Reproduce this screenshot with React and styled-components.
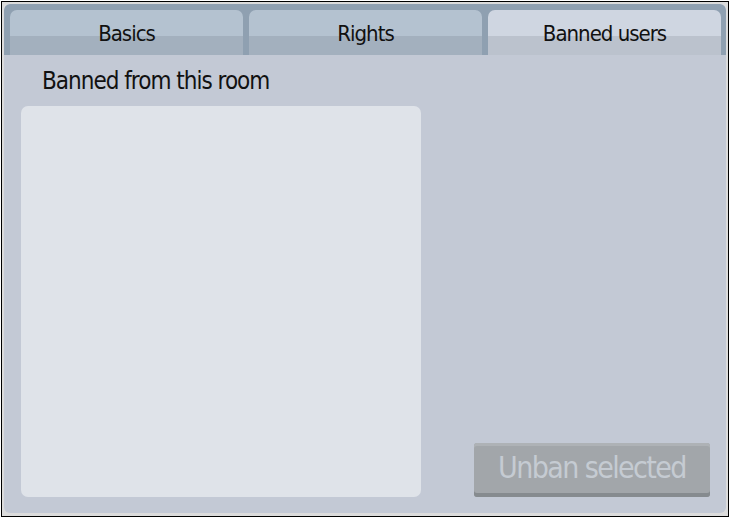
import React from "react";
import styled, { createGlobalStyle } from "styled-components";

const GlobalStyle = createGlobalStyle`
    html, body {
        margin: 0;
        padding: 0;
        background: #ffffff;
    }
    body {
        font-family: "DejaVu Sans Condensed", "DejaVu Sans", sans-serif;
    }
`;

const Frame = styled.div`
    box-sizing: border-box;
    width: 728px;
    height: 516px;
    margin: 1px 0 0 1px;
    border: 1px solid #000000;
    background: #dcdcdc;
    padding: 2px 2px 3px 2px;
`;

const Panel = styled.div`
    box-sizing: border-box;
    height: 100%;
    background: #c3c9d5;
    border-radius: 6px;
    display: flex;
    flex-direction: column;
    overflow: hidden;
`;

const TabBar = styled.div`
    display: flex;
    gap: 6px;
    height: 51px;
    padding: 6px 5px 0 6px;
    box-sizing: border-box;
    background: #8fa0b1;
    border-radius: 6px 6px 0 0;
`;

const Tab = styled.div`
    flex: 1;
    display: flex;
    align-items: flex-start;
    justify-content: center;
    padding-top: 11px;
    border-radius: 7px 7px 0 0;
    font-size: 22px;
    letter-spacing: -1px;
    color: #111111;
    background: ${p =>
        p.active
            ? "linear-gradient(#cfd6e1 0 26px, #bbc2cd 26px)"
            : "linear-gradient(#b4c2d0 0 26px, #a3b0be 26px)"};
`;

const Body = styled.div`
    flex: 1;
    display: grid;
    grid-template-columns: 400px 1fr;
    grid-template-rows: auto 1fr;
    column-gap: 53px;
    padding: 10px 16px 16px 17px;
`;

const Heading = styled.div`
    grid-column: 1 / 3;
    box-sizing: border-box;
    padding: 2px 0 0 21px;
    height: 41px;
    font-size: 24px;
    letter-spacing: -1px;
    color: #111111;
`;

const ListBox = styled.div`
    background: #dfe3e9;
    border-radius: 7px;
`;

const Side = styled.div`
    display: flex;
    flex-direction: column;
    justify-content: flex-end;
`;

const Button = styled.button`
    height: 54px;
    border: none;
    border-radius: 3px;
    padding: 0 0 6px;
    font-family: inherit;
    font-size: 30px;
    letter-spacing: -1.6px;
    color: #c5cbd2;
    background: #a2a6aa;
    box-shadow: inset 0 -4px 0 #868b8f, inset 0 3px 0 #aeb2b6;
`;

export default function App() {
    return (
        <>
            <GlobalStyle />
            <Frame>
                <Panel>
                    <TabBar>
                        <Tab>Basics</Tab>
                        <Tab>Rights</Tab>
                        <Tab active>Banned users</Tab>
                    </TabBar>
                    <Body>
                        <Heading>Banned from this room</Heading>
                        <ListBox />
                        <Side>
                            <Button disabled>Unban selected</Button>
                        </Side>
                    </Body>
                </Panel>
            </Frame>
        </>
    );
}
